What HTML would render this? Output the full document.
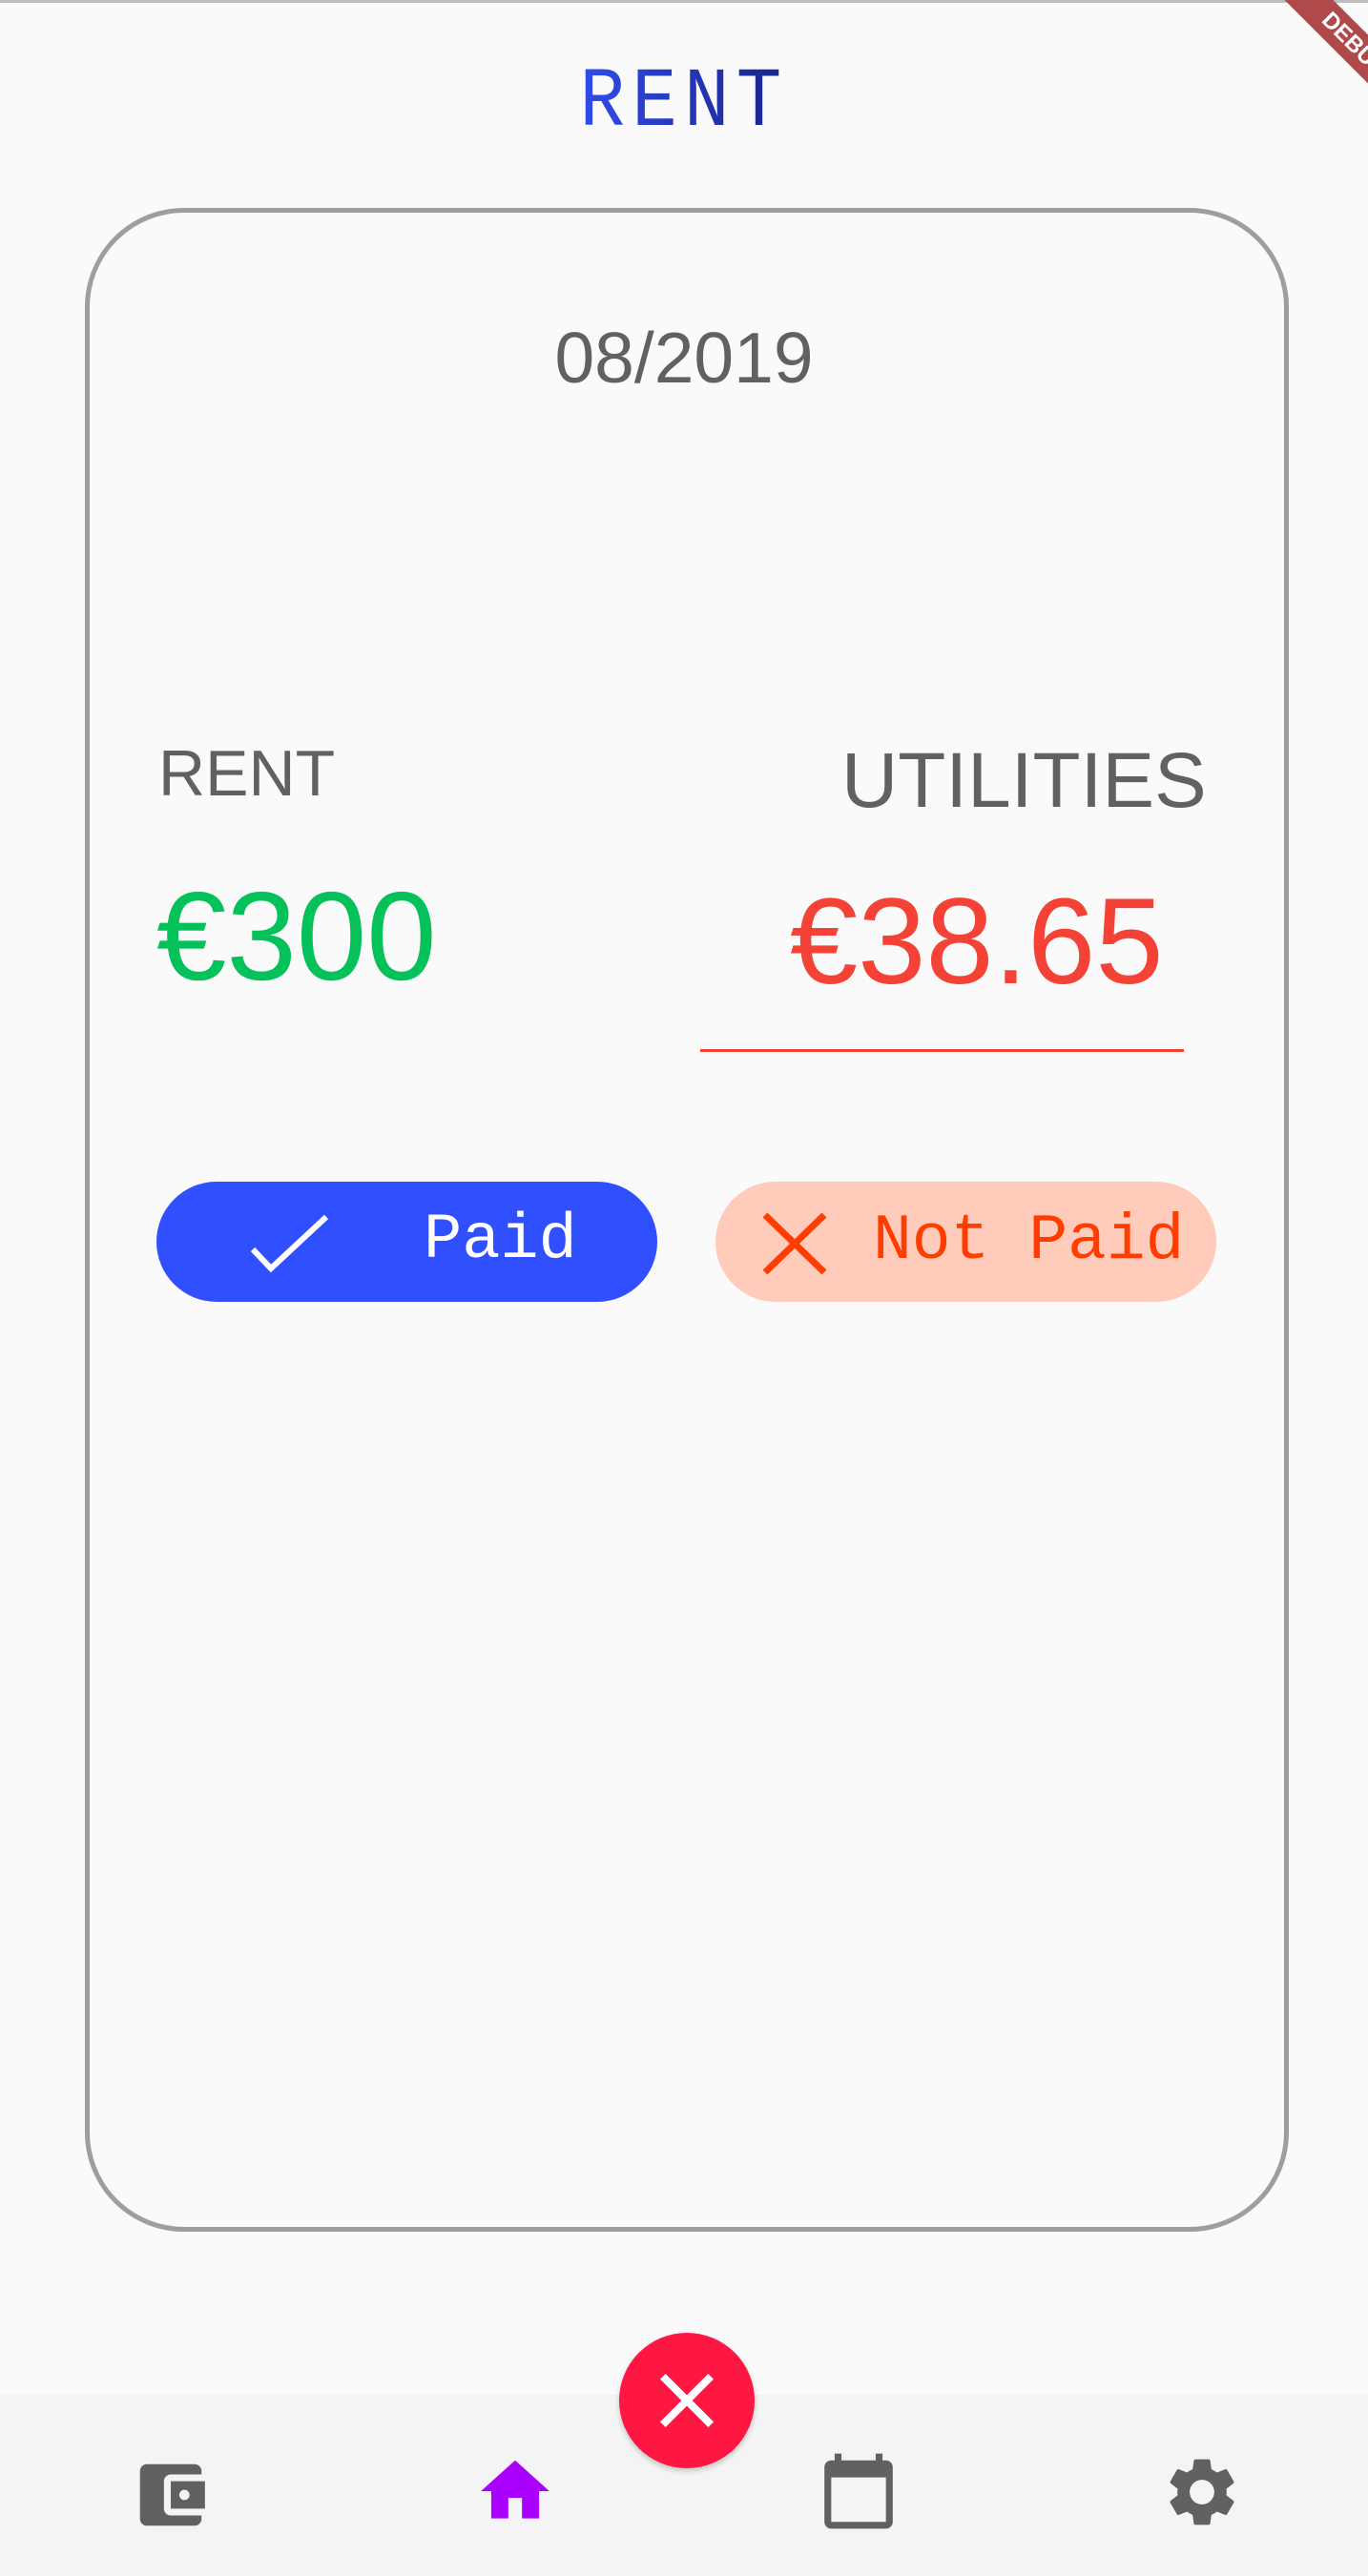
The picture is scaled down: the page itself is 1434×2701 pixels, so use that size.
<!DOCTYPE html>
<html><head><meta charset="utf-8"><style>
*{margin:0;padding:0;box-sizing:border-box}
body{width:1434px;height:2701px;background:#fafafa;position:relative;overflow:hidden;font-family:"Liberation Sans",sans-serif}
.abs{position:absolute}
.title{left:0;width:1434px;top:59px;text-align:center;font-family:"Liberation Mono",monospace;font-size:88px;letter-spacing:8px;line-height:100px;background:linear-gradient(90deg,#3350f5 40%,#162080 60%);-webkit-background-clip:text;background-clip:text;color:transparent;transform:scaleX(0.9)}
.card{left:89px;top:218px;width:1262px;height:2122px;border:5px solid #9e9e9e;border-radius:104px}
.t{white-space:nowrap;line-height:1}
.btn{border-radius:63px;height:126px;top:1239px}
.bar{left:0;top:2511px;width:1434px;height:190px;background:#f4f4f4}
.ic{position:absolute;width:86px;height:86px}
</style></head><body>
<div class="abs" style="left:0;top:0;width:1434px;height:3px;background:#bdbdbd"></div>
<div class="abs title">RENT</div>
<div class="abs card"></div>
<div class="abs t" style="left:0;width:1434px;text-align:center;top:338px;font-size:75px;color:#616161">08/2019</div>
<div class="abs t" style="left:166px;top:777px;font-size:68px;color:#616161">RENT</div>
<div class="abs t" style="left:882px;top:778px;font-size:82px;color:#616161">UTILITIES</div>
<div class="abs t" style="left:164px;top:916px;font-size:132px;color:#05c15a">€300</div>
<div class="abs t" style="left:828px;top:924px;font-size:128px;color:#f44336">€38.65</div>
<div class="abs" style="left:734px;top:1100px;width:507px;height:3px;background:#f44336"></div>
<div class="abs btn" style="left:164px;width:525px;background:#304ffe"></div>
<svg class="abs" style="left:262px;top:1272px" width="82" height="66" viewBox="0 0 82 66"><polyline points="3,38 22,58 80,4" fill="none" stroke="#fff" stroke-width="6"/></svg>
<div class="abs t" style="left:444px;top:1268px;font-family:'Liberation Mono',monospace;font-size:67px;color:#fff">Paid</div>
<div class="abs btn" style="left:750px;width:525px;background:#ffccbc"></div>
<svg class="abs" style="left:798px;top:1271px" width="70" height="66" viewBox="0 0 70 66"><path d="M4 3L66 63M66 3L4 63" stroke="#ff3d00" stroke-width="7"/></svg>
<div class="abs t" style="left:915px;top:1268px;font-family:'Liberation Mono',monospace;font-size:68px;color:#ff3d00">Not Paid</div>
<div class="abs bar"></div>
<div class="abs" style="left:649px;top:2446px;width:142px;height:142px;border-radius:50%;background:#ff1744;box-shadow:0 3px 6px rgba(0,0,0,.2)"></div>
<svg class="abs" style="left:692px;top:2489px" width="56" height="56" viewBox="5 5 14 14"><path fill="#fff" d="M19 6.41L17.59 5 12 10.59 6.41 5 5 6.41 10.59 12 5 17.59 6.41 19 12 13.41 17.59 19 19 17.59 13.41 12z"/></svg>
<svg class="ic" style="left:136px;top:2573px" viewBox="0 0 24 24"><path fill="#616161" d="M21 18v1c0 1.1-.9 2-2 2H5c-1.11 0-2-.9-2-2V5c0-1.1.89-2 2-2h14c1.1 0 2 .9 2 2v1h-9c-1.11 0-2 .9-2 2v8c0 1.1.89 2 2 2h9zm-9-2h10V8H12v8zm4-2.5c-.83 0-1.5-.67-1.5-1.5s.67-1.5 1.5-1.5 1.5.67 1.5 1.5-.67 1.5-1.5 1.5z"/></svg>
<svg class="ic" style="left:497px;top:2569px" viewBox="0 0 24 24"><path fill="#aa00ff" d="M10 20v-6h4v6h5v-8h3L12 3 2 12h3v8z"/></svg>
<svg class="ic" style="left:857px;top:2569px" viewBox="0 0 24 24"><path fill="#616161" d="M20 3h-1V1h-2v2H7V1H5v2H4c-1.1 0-2 .9-2 2v16c0 1.1.9 2 2 2h16c1.1 0 2-.9 2-2V5c0-1.1-.9-2-2-2zm0 18H4V8h16v13z"/></svg>
<svg class="ic" style="left:1217px;top:2570px" viewBox="0 0 24 24"><path fill="#616161" d="M19.14 12.94c.04-.3.06-.61.06-.94 0-.32-.02-.64-.07-.94l2.030-1.58c.18-.14.23-.41.12-.61l-1.92-3.32c-.12-.22-.37-.29-.59-.22l-2.39.96c-.5-.38-1.03-.7-1.620-.94l-.36-2.54c-.04-.24-.24-.41-.48-.41h-3.84c-.24 0-.43.17-.47.41l-.36 2.54c-.59.24-1.13.57-1.62.94l-2.39-.96c-.22-.08-.47 0-.59.22L2.74 8.87c-.12.21-.08.47.12.61l2.03 1.58c-.05.3-.09.63-.09.94s.02.64.07.94l-2.03 1.58c-.18.14-.23.41-.12.61l1.92 3.32c.12.22.37.29.59.22l2.39-.96c.5.38 1.03.7 1.62.94l.36 2.54c.05.24.24.41.48.41h3.84c.24 0 .44-.17.47-.41l.36-2.54c.59-.24 1.13-.56 1.62-.94l2.39.96c.22.08.47 0 .59-.22l1.92-3.32c.12-.22.07-.47-.12-.61l-2.01-1.58zM12 15.6c-1.98 0-3.6-1.62-3.6-3.6s1.62-3.6 3.6-3.6 3.6 1.62 3.6 3.6-1.62 3.6-3.6 3.6z"/></svg>
<div class="abs" style="left:1310px;top:30px;width:220px;height:36px;background:#b04a4a;transform:rotate(45deg);transform-origin:center;color:#fff;font-weight:bold;font-size:24px;text-align:center;line-height:36px">DEBUG</div>
</body></html>
